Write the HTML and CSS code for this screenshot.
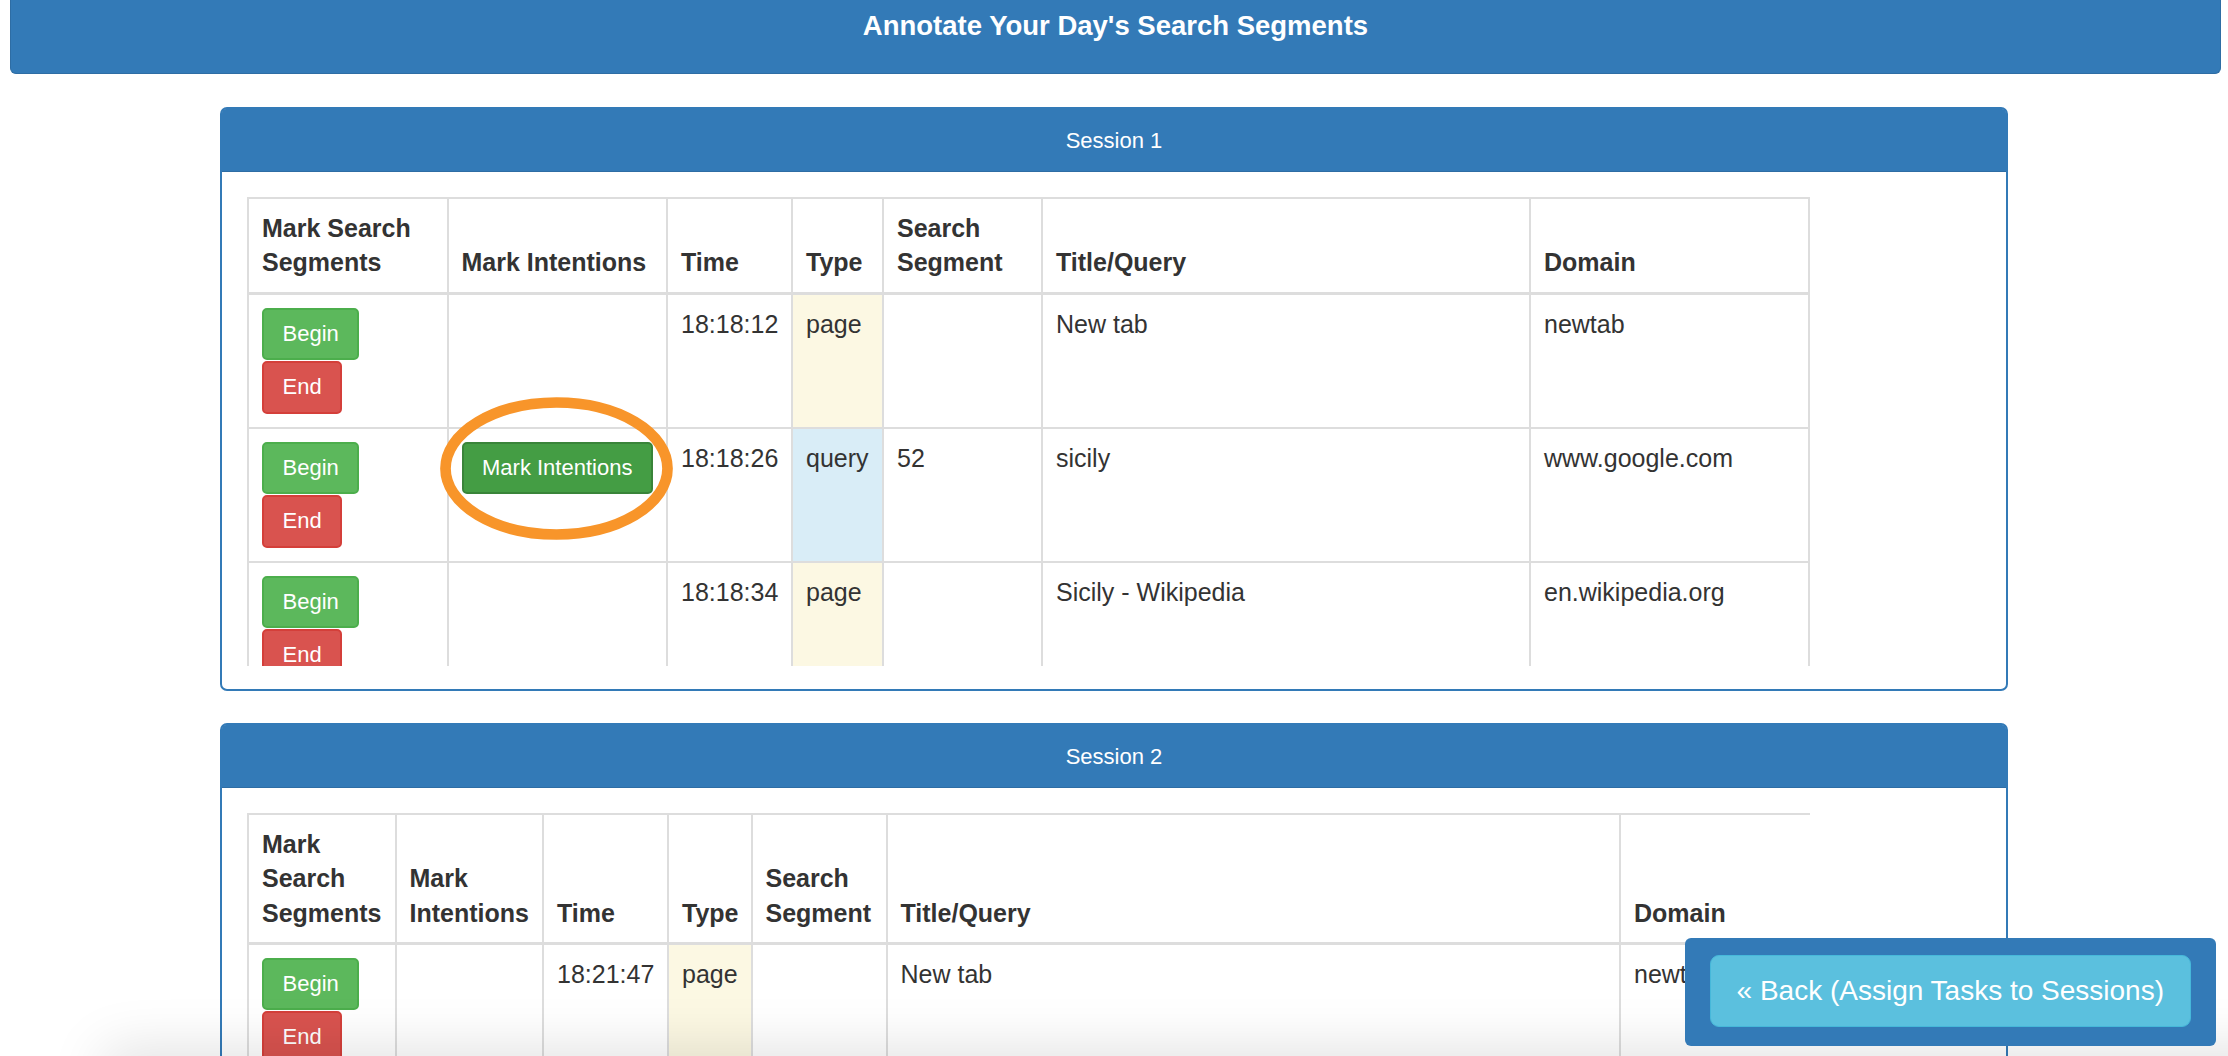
FILE: index.html
```html
<!DOCTYPE html>
<html lang="en">
<head>
<meta charset="utf-8">
<title>Annotate Your Day's Search Segments</title>
<link rel="stylesheet" href="styles.css">
</head>
<body>
<header class="page-header">
  <h1 class="page-title">Annotate Your Day's Search Segments</h1>
</header>

<main class="sessions">
  <section class="panel">
    <div class="panel-heading">Session 1</div>
    <div class="panel-body">
      <div class="table-scroll">
        <table class="seg-table seg-table-1">
          <colgroup>
            <col class="t1c1"><col class="t1c2"><col class="t1c3"><col class="t1c4"><col class="t1c5"><col class="t1c6"><col class="t1c7">
          </colgroup>
          <thead>
            <tr>
              <th>Mark Search Segments</th>
              <th>Mark Intentions</th>
              <th>Time</th>
              <th>Type</th>
              <th>Search Segment</th>
              <th>Title/Query</th>
              <th>Domain</th>
            </tr>
          </thead>
          <tbody>
            <tr>
              <td><div class="btn-stack"><button class="btn btn-begin">Begin</button><button class="btn btn-end">End</button></div></td>
              <td></td>
              <td>18:18:12</td>
              <td class="type-page">page</td>
              <td></td>
              <td>New tab</td>
              <td>newtab</td>
            </tr>
            <tr>
              <td><div class="btn-stack"><button class="btn btn-begin">Begin</button><button class="btn btn-end">End</button></div></td>
              <td class="intent-cell">
                <div class="btn-stack"><button class="btn btn-intent">Mark Intentions</button></div>
                <svg class="highlight-ring" width="233" height="144" viewBox="0 0 233 144" aria-hidden="true">
                  <ellipse cx="116.5" cy="71.5" rx="111" ry="66" fill="none" stroke="#f8952a" stroke-width="10.7"/>
                </svg>
              </td>
              <td>18:18:26</td>
              <td class="type-query">query</td>
              <td>52</td>
              <td>sicily</td>
              <td>www.google.com</td>
            </tr>
            <tr>
              <td><div class="btn-stack"><button class="btn btn-begin">Begin</button><button class="btn btn-end">End</button></div></td>
              <td></td>
              <td>18:18:34</td>
              <td class="type-page">page</td>
              <td></td>
              <td>Sicily - Wikipedia</td>
              <td>en.wikipedia.org</td>
            </tr>
            <tr>
              <td><div class="btn-stack"><button class="btn btn-begin">Begin</button><button class="btn btn-end">End</button></div></td>
              <td></td>
              <td>18:18:51</td>
              <td class="type-page">page</td>
              <td></td>
              <td>Palermo - Wikipedia</td>
              <td>en.wikipedia.org</td>
            </tr>
          </tbody>
        </table>
      </div>
    </div>
  </section>

  <section class="panel">
    <div class="panel-heading">Session 2</div>
    <div class="panel-body">
      <div class="table-scroll">
        <table class="seg-table seg-table-2">
          <colgroup>
            <col class="t2c1"><col class="t2c2"><col class="t2c3"><col class="t2c4"><col class="t2c5"><col class="t2c6"><col class="t2c7">
          </colgroup>
          <thead>
            <tr>
              <th>Mark Search Segments</th>
              <th>Mark Intentions</th>
              <th>Time</th>
              <th>Type</th>
              <th>Search Segment</th>
              <th>Title/Query</th>
              <th>Domain</th>
            </tr>
          </thead>
          <tbody>
            <tr>
              <td><div class="btn-stack"><button class="btn btn-begin">Begin</button><button class="btn btn-end">End</button></div></td>
              <td></td>
              <td>18:21:47</td>
              <td class="type-page">page</td>
              <td></td>
              <td>New tab</td>
              <td>newtab</td>
            </tr>
            <tr>
              <td><div class="btn-stack"><button class="btn btn-begin">Begin</button><button class="btn btn-end">End</button></div></td>
              <td></td>
              <td>18:21:55</td>
              <td class="type-query">query</td>
              <td></td>
              <td>sicily weather</td>
              <td>www.google.com</td>
            </tr>
          </tbody>
        </table>
      </div>
    </div>
  </section>
</main>

<div class="bottom-shade" aria-hidden="true"></div>

<div class="back-dock">
  <button class="btn-back">&laquo; Back (Assign Tasks to Sessions)</button>
</div>
</body>
</html>
```

FILE: styles.css
```css
* {
  box-sizing: border-box;
}

html, body {
  margin: 0;
  padding: 0;
}

body {
  font-family: "Liberation Sans", Arial, Helvetica, sans-serif;
  font-size: 25px;
  line-height: 34.3px;
  color: #333;
  background: #fff;
}

/* ---------- page header ---------- */
.page-header {
  margin: 0 7px 33px 10px;
  height: 74px;
  padding-top: 10px;
  background: #337ab7;
  border: 1px solid #2e6da4;
  border-top: 0;
  border-radius: 0 0 6px 6px;
}

.page-title {
  margin: 0;
  font-size: 27.5px;
  line-height: 31px;
  font-weight: bold;
  color: #fff;
  text-align: center;
}

/* ---------- session panels ---------- */
.sessions {
  width: 1788px;
  margin: 0 auto;
}

.panel {
  border: 2px solid #337ab7;
  border-radius: 7px;
  margin-bottom: 32px;
  background: #fff;
}

.panel-heading {
  height: 63px;
  padding-top: 19.5px;
  background: #337ab7;
  border-bottom: 1px solid #2e6da4;
  border-radius: 4px 4px 0 0;
  color: #fff;
  font-size: 22px;
  line-height: 24px;
  text-align: center;
}

.panel-body {
  padding: 25px 25px 23px;
}

.table-scroll {
  width: 1563px;
  height: 469px;
  overflow: hidden;
}

/* ---------- tables ---------- */
.seg-table {
  border-collapse: separate;
  border-spacing: 0;
  table-layout: fixed;
}

.seg-table-1 { width: 1563px; }
.seg-table-2 { width: 1800px; }

.t1c1 { width: 199.5px; }
.t1c2 { width: 219.5px; }
.t1c3 { width: 125px; }
.t1c4 { width: 91px; }
.t1c5 { width: 159px; }
.t1c6 { width: 488px; }
.t1c7 { width: 281px; }

.t2c1 { width: 147.5px; }
.t2c2 { width: 147.5px; }
.t2c3 { width: 125px; }
.t2c4 { width: 83.5px; }
.t2c5 { width: 135px; }
.t2c6 { width: 733.5px; }
.t2c7 { width: 428px; }

.seg-table th,
.seg-table td {
  border-left: 2px solid #dddddd;
  border-top: 2px solid #dddddd;
  padding: 12px 13px;
  text-align: left;
}

.seg-table th:last-child,
.seg-table td:last-child {
  border-right: 2px solid #dddddd;
}

.seg-table th {
  vertical-align: bottom;
  font-weight: bold;
  border-bottom: 3px solid #dddddd;
}

.seg-table td {
  vertical-align: top;
}

.seg-table tbody tr:first-child td {
  border-top: 0;
}

.type-page { background: #fcf8e3; }
.type-query { background: #d9edf7; }

/* ---------- buttons ---------- */
.btn-stack {
  display: flex;
  flex-direction: column;
  align-items: flex-start;
  gap: 1px;
  margin: 1px 0;
}

.btn {
  display: inline-block;
  height: 52.5px;
  padding: 0 18.5px;
  margin: 0;
  font-family: inherit;
  font-size: 22px;
  line-height: 48.5px;
  color: #fff;
  border: 2px solid transparent;
  border-radius: 5px;
  white-space: nowrap;
  cursor: pointer;
}

.btn-begin {
  background: #5cb85c;
  border-color: #4cae4c;
}

.btn-end {
  background: #d9534f;
  border-color: #d43f3a;
}

.btn-intent {
  background: #449d44;
  border-color: #398439;
}

/* annotation ring around the Mark Intentions button */
.intent-cell {
  position: relative;
}

.highlight-ring {
  position: absolute;
  left: -8.5px;
  top: -31.6px;
  display: block;
  pointer-events: none;
}

/* ---------- bottom shade + back dock ---------- */
.bottom-shade {
  position: fixed;
  left: 110px;
  right: -120px;
  bottom: -40px;
  height: 40px;
  box-shadow: 0 0 55px 6px rgba(0, 0, 0, 0.13);
  z-index: 5;
  pointer-events: none;
}

.back-dock {
  position: fixed;
  right: 12px;
  bottom: 10px;
  padding: 17px 25px 19px;
  background: #337ab7;
  border-radius: 6px;
  z-index: 10;
}

.btn-back {
  display: block;
  height: 72px;
  padding: 0 26px;
  margin: 0;
  font-family: inherit;
  font-size: 28px;
  line-height: 70px;
  color: #fff;
  background: #5bc0de;
  border: 1px solid #46b8da;
  border-radius: 9px;
  white-space: nowrap;
  cursor: pointer;
}
```
